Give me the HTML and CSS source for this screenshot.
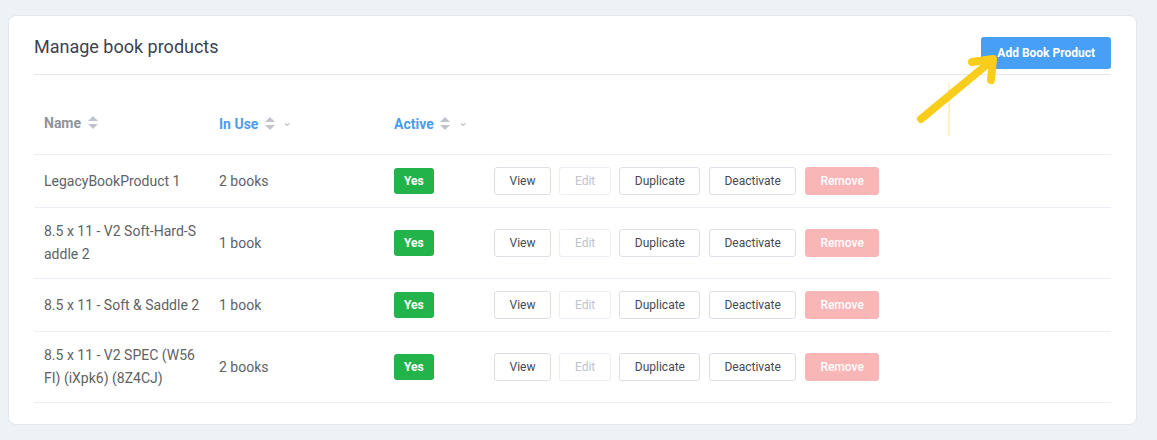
FILE: index.html
```
<!DOCTYPE html>
<html lang="en">

<head>
    <meta charset="UTF-8">
    <meta name="viewport" content="width=device-width, initial-scale=1.0">
    <link rel="stylesheet" href="styles.css">
    <title>Manage book products</title>
</head>

<body>
    <div class="card">
        <div class="card-header">
            <h2 class="title">Manage book products</h2>
            <button class="btn-primary">Add Book Product</button>
        </div>

        <table class="products">
            <thead>
                <tr>
                    <th class="col-name">Name <span class="sort"></span></th>
                    <th class="col-use blue">In Use <span class="sort"></span> <span class="chev">&#8964;</span></th>
                    <th class="col-active blue">Active <span class="sort"></span> <span class="chev">&#8964;</span></th>
                    <th></th>
                </tr>
            </thead>
            <tbody>
                <tr>
                    <td>LegacyBookProduct 1</td>
                    <td>2 books</td>
                    <td><span class="tag">Yes</span></td>
                    <td>
                        <div class="actions">
                            <button class="btn">View</button>
                            <button class="btn disabled">Edit</button>
                            <button class="btn">Duplicate</button>
                            <button class="btn">Deactivate</button>
                            <button class="btn danger">Remove</button>
                        </div>
                    </td>
                </tr>
                <tr>
                    <td>8.5 x 11 - V2 Soft-Hard-Saddle 2</td>
                    <td>1 book</td>
                    <td><span class="tag">Yes</span></td>
                    <td>
                        <div class="actions">
                            <button class="btn">View</button>
                            <button class="btn disabled">Edit</button>
                            <button class="btn">Duplicate</button>
                            <button class="btn">Deactivate</button>
                            <button class="btn danger">Remove</button>
                        </div>
                    </td>
                </tr>
                <tr>
                    <td>8.5 x 11 - Soft &amp; Saddle 2</td>
                    <td>1 book</td>
                    <td><span class="tag">Yes</span></td>
                    <td>
                        <div class="actions">
                            <button class="btn">View</button>
                            <button class="btn disabled">Edit</button>
                            <button class="btn">Duplicate</button>
                            <button class="btn">Deactivate</button>
                            <button class="btn danger">Remove</button>
                        </div>
                    </td>
                </tr>
                <tr>
                    <td>8.5 x 11 - V2 SPEC (W56FI) (iXpk6) (8Z4CJ)</td>
                    <td>2 books</td>
                    <td><span class="tag">Yes</span></td>
                    <td>
                        <div class="actions">
                            <button class="btn">View</button>
                            <button class="btn disabled">Edit</button>
                            <button class="btn">Duplicate</button>
                            <button class="btn">Deactivate</button>
                            <button class="btn danger">Remove</button>
                        </div>
                    </td>
                </tr>
            </tbody>
        </table>

        <!-- annotation arrow pointing at the add button -->
        <svg class="arrow" width="100" height="100" viewBox="0 0 100 100">
            <line x1="48" y1="28" x2="48" y2="81" stroke="#fbe38a" stroke-width="1" />
            <g stroke="#f9cd1b" stroke-width="8" stroke-linecap="round" stroke-linejoin="round" fill="none">
                <line x1="20" y1="64" x2="89" y2="7" />
                <polyline points="71,7 92,4 90,25" />
            </g>
        </svg>
    </div>
</body>

</html>
```

FILE: styles.css
```
body {
    margin: 0;
    background-color: #eef1f6;
    font-family: Roboto, "Liberation Sans", sans-serif;
    color: #606266;
}

.card {
    position: relative;
    margin: 15px 20px 0 8px;
    padding: 0 25px 21px 25px;
    background-color: #fff;
    border: 1px solid #e4e7ed;
    border-radius: 8px;
    height: 387px;
}

.card-header {
    display: flex;
    justify-content: space-between;
    align-items: flex-start;
    padding: 20px 0 5px 0;
    border-bottom: 1px solid #e4e7ed;
}

.title {
    margin: 0;
    font-size: 18px;
    font-weight: 400;
    line-height: 22px;
    color: #3c4350;
}

.btn-primary {
    margin-top: 1px;
    height: 32px;
    padding: 0 16px;
    background-color: #47a0f5;
    color: #fff;
    border: none;
    border-radius: 3px;
    font-family: Roboto, "Liberation Sans", sans-serif;
    font-size: 12px;
    font-weight: 700;
}

.products {
    width: 100%;
    border-collapse: collapse;
    font-size: 14px;
}

.products th {
    text-align: left;
    font-weight: 700;
    color: #909399;
    padding: 37px 10px 20px 10px;
    line-height: 20px;
    border-bottom: 1px solid #ebeef5;
    white-space: nowrap;
}

.products th.blue {
    color: #4a9cf0;
}

.col-name {
    width: 158px;
}

.col-use {
    width: 155px;
}

.col-active {
    width: 80px;
}

.sort {
    display: inline-block;
    position: relative;
    width: 10px;
    height: 14px;
    margin-left: 3px;
    vertical-align: -2px;
}

.sort::before,
.sort::after {
    content: "";
    position: absolute;
    left: 0;
    border-left: 5px solid transparent;
    border-right: 5px solid transparent;
}

.sort::before {
    top: 0;
    border-bottom: 5px solid #c0c4cc;
}

.sort::after {
    bottom: 1px;
    border-top: 5px solid #c0c4cc;
}

.chev {
    display: inline-block;
    margin-left: 4px;
    font-size: 12px;
    font-weight: 400;
    color: #c0c4cc;
    vertical-align: 3px;
}

.products td {
    padding: 12px 10px;
    line-height: 23px;
    border-bottom: 1px solid #ebeef5;
    word-break: break-all;
}

.products th:first-child,
.products td:first-child {
    padding-right: 7px;
}

.tag {
    display: inline-block;
    height: 26px;
    line-height: 26px;
    padding: 0 10px;
    background-color: #22b44a;
    color: #fff;
    border-radius: 3px;
    font-size: 12px;
    font-weight: 700;
    vertical-align: middle;
}

.actions {
    display: flex;
    gap: 8.5px;
}

.btn {
    height: 28px;
    padding: 0 14.5px;
    background-color: #fff;
    border: 1px solid #dcdfe6;
    border-radius: 3px;
    color: #454a54;
    font-family: Roboto, "Liberation Sans", sans-serif;
    font-size: 12px;
    font-weight: 400;
}

.btn.disabled {
    color: #c0c4cc;
    border-color: #ebeef5;
}

.btn.danger {
    background-color: #f9b6b6;
    border-color: #f9b6b6;
    color: #fff;
    font-weight: 500;
}

.arrow {
    position: absolute;
    left: 892px;
    top: 39px;
}
```
